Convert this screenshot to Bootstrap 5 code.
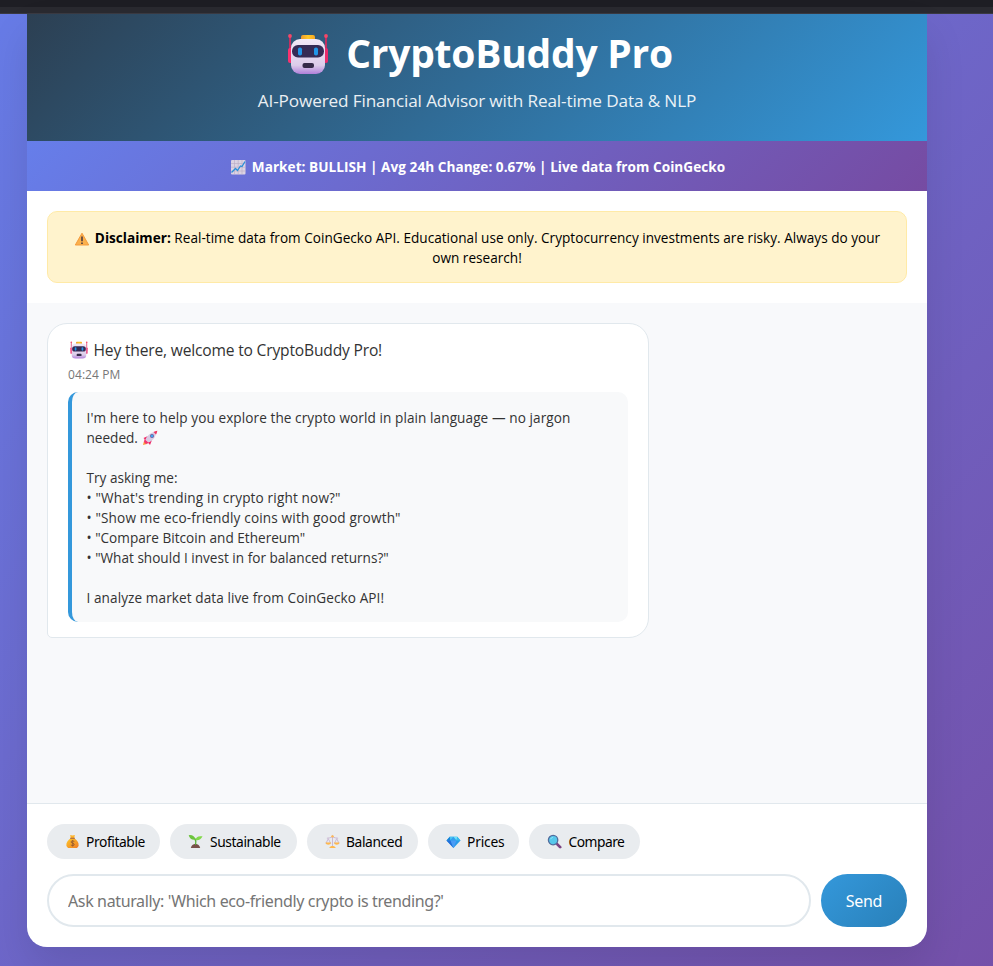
<!DOCTYPE html>
<html lang="en">
<head>
<meta charset="utf-8">
<meta name="viewport" content="width=device-width, initial-scale=1">
<title>CryptoBuddy Pro</title>
<link href="https://cdn.jsdelivr.net/npm/bootstrap@5.3.0/dist/css/bootstrap.min.css" rel="stylesheet">
<style>
body{font-family:"Open Sans","Noto Sans",sans-serif;color:#333;height:966px;background:linear-gradient(135deg,#667eea 0%,#764ba2 100%) 0 -100px/1150px 1150px no-repeat;overflow:hidden}
.browser-edge{height:14px;background:linear-gradient(#1e1e24 0 7px,#2a2a30 7px 13px,#3a3a42 13px 14px)}
.app{width:900px;height:933px;margin-left:27px;background:#fff;border-radius:0 0 20px 20px;box-shadow:0 20px 40px rgba(0,0,0,.1);overflow:hidden}
.app-head{height:127px;padding-top:12px;background:linear-gradient(135deg,#2c3e50,#3498db) 0 100%/100% 143px}
.ic{display:inline-block;flex:none;width:16px;height:16px}
.title{font-size:39px;font-weight:700;line-height:53px;gap:17px;padding-left:6px;letter-spacing:-.25px}
.title .ic{width:42px;height:42px;margin-top:2px}
.subtitle{font-size:17.2px;line-height:24px;opacity:.9;margin-top:10px;letter-spacing:-.14px}
.market{height:50px;padding-top:2px;padding-left:1px;gap:6px;background:linear-gradient(135deg,#667eea,#764ba2);font-size:13.6px;font-weight:700;letter-spacing:.035px}
.notice-wrap{padding:20px}
.notice{height:72px;background:#fff3cd;border:1px solid #ffeaa7;border-radius:10px;padding-top:16px;font-size:13.6px;line-height:20px;color:#000;letter-spacing:.01px}
.notice .ic{vertical-align:-4px;margin-right:5px}
.chat{height:500px;background:#f8f9fb;padding:20px}
.bubble{width:602px;height:315px;border:1px solid #e1e8ed;border-radius:20px 20px 20px 5px;padding:15px 20px}
.hello{font-size:15.6px;line-height:24px;letter-spacing:-.18px;padding-left:2px;gap:5.5px;margin-top:-1px}
.hello .ic{width:18px;height:18px}
.time{font-size:12px;line-height:16px;color:#777;margin-top:5px;letter-spacing:.08px}
.reply{height:230px;background:#f8f9fa;border-left:4px solid #3498db;border-radius:10px;font-size:13.6px;line-height:20px;padding:16px 14.5px;margin-top:9px;white-space:pre-line;letter-spacing:.08px}
.reply .ic{vertical-align:-3px}
.looser{letter-spacing:.15px}
.tighter{letter-spacing:0}
.composer{border-top:1px solid #e1e8ed;padding:20px;gap:15px}
.g10{gap:10px}
.chip{height:35px;border-radius:20px;background:#e9ecef;border:0;font:13.8px/20px "Noto Sans",sans-serif;color:#000;padding:0 0 0 18px;gap:5px;white-space:nowrap;letter-spacing:-.4px}
.chip-profit{width:113px}.chip-sustain{width:127px;gap:6px}.chip-balance{width:111px}.chip-price{width:91px;letter-spacing:-.2px}.chip-compare{width:111px;gap:5.5px;letter-spacing:-.5px}
.chip .ic{width:15px;height:15px;margin-right:1px}
.ask{height:53px;width:764px;border:2px solid #e1e8ed;border-radius:27px;font:16px/24px "Noto Sans",sans-serif;letter-spacing:-.37px;padding:0 19px;outline:0}
.ask::placeholder{color:#757575;opacity:1}
.send{width:86px;height:53px;border:0;border-radius:27px;background:linear-gradient(135deg,#3498db,#2980b9);font:16px/24px "Noto Sans",sans-serif;letter-spacing:-.3px;color:#fff}
</style>
</head>
<body>
<svg width="0" height="0" class="position-absolute" aria-hidden="true"><defs>
<linearGradient id="gFace" x2="0" y2="1"><stop stop-color="#f2e9f7"/><stop offset=".75" stop-color="#dccdea"/><stop offset="1" stop-color="#b07fda"/></linearGradient>
<linearGradient id="gGold" x2="1" y2="1"><stop stop-color="#ffc928"/><stop offset="1" stop-color="#ee7b28"/></linearGradient>
<linearGradient id="gCap"><stop stop-color="#ee9a2e"/><stop offset=".5" stop-color="#ffc928"/><stop offset="1" stop-color="#f5a623"/></linearGradient>
<symbol id="robot" viewBox="0 0 42 42"><path d="M3 3v20M39 3v20" stroke="#dc285e" stroke-width="1.700"/><circle cx="3" cy="3" r="1.900" fill="#f44868"/><circle cx="39" cy="3" r="1.900" fill="#f44868"/><rect x="1" y="15" width="6" height="15" rx="2" fill="#f9326f"/><rect x="35" y="15" width="6" height="15" rx="2" fill="#e82b6c"/><rect x="14" y="2" width="14" height="7" rx="2" fill="url(#gCap)"/><rect x="4" y="6" width="34" height="35" rx="9" fill="url(#gFace)"/><rect x="5" y="12" width="32" height="12.500" rx="6" fill="#352b55"/><rect x="11" y="14.500" width="4" height="8" rx="1.800" fill="#2196e8"/><rect x="27" y="14.500" width="4" height="8" rx="1.800" fill="#2196e8"/><rect x="15.500" y="30" width="11.500" height="5" rx="2" fill="#352b49"/></symbol>
<symbol id="chart" viewBox="0 0 16 16"><rect x="1" y="1" width="14.500" height="14.500" rx="1" fill="#dcd3e3"/><path d="M4.500 1v14.500M8.200 1v14.500M12 1v14.500M1 4.500h14.500M1 8.200h14.500M1 12h14.500" stroke="#b8abc5" stroke-width=".6"/><path d="M1.500 13.500 5.500 9.500l2 2L10.500 7l1.500.5L15 2.500" fill="none" stroke="#2b8fd8" stroke-width="1.300"/></symbol>
<symbol id="warn" viewBox="0 0 16 16"><path d="M8 2.200 14.700 14H1.300z" fill="#fbb04c" stroke="#f59b3d" stroke-width="1" stroke-linejoin="round"/><path d="M8 5.500v4.800M8 11.500v1.500" stroke="#4b3a42" stroke-width="1.600"/></symbol>
<symbol id="rocket" viewBox="0 0 16 16"><path d="M1 15l1-4 3 3z" fill="#ff9838"/><path d="M6 6 1.500 8l2 2zM10 10l-2 5-2-2.500z" fill="#ee2864"/><path d="M3.500 9.500Q6 3.500 12 2l2 2q-1.500 6-7.500 8.500z" fill="#d8cbe3"/><path d="M11.500 2Q13 1 15.300.7 15 3 14 4.500z" fill="#ef3562"/><path d="m2.500 9 4.500 4-3 1-2-2z" fill="#f2366f"/><circle cx="10" cy="6" r="2" fill="#72599e"/><circle cx="10" cy="6" r="1.300" fill="#40a4eb"/></symbol>
<symbol id="bag" viewBox="0 0 16 16"><path d="M5.500 1q2.500 1 5 0L9.800 4.500H6.200z" fill="#ffb52a"/><path d="M6 4.500h4q5 3.500 4.500 7.500-.5 3-3 3h-7q-2.500 0-3-3Q1 8 6 4.500z" fill="url(#gGold)"/><path d="M5.500 4.500h5" stroke="#9d593b" stroke-width="1.200"/><path d="M10 8q-2-1.300-3.300-.3-1.200 1.500 1.500 2 2.500.8 1.300 2.300-1.500 1-3.300-.3M8.200 6.500v6.800" fill="none" stroke="#8a5034" stroke-width=".8"/></symbol>
<symbol id="sprout" viewBox="0 0 16 16"><path d="M3 15q1-4 5-4.500 4 .5 5 4.500z" fill="#79504b"/><path d="M8 11.500Q9 8 7.500 5" fill="none" stroke="#5db63c" stroke-width="1.600"/><path d="M8 6Q2.500 7 .7 1.200 6.700.5 8 6z" fill="#6cc33d"/><path d="M8 6.500Q8.500 1.500 15.500 2.500 13 7.500 8 6.500z" fill="#82d94a"/></symbol>
<symbol id="scale" viewBox="0 0 16 16"><path d="M8 1v12M2 4.500q3 0 6-1.500 3 1.500 6 1.500M3.500 5 1 10h5zM12.500 5 10 10h5z" fill="none" stroke="#c9b5d2" stroke-width="1"/><path d="M.5 9h6Q6 11.500 3.500 11.500T.5 9zM9.500 9h6q-.5 2.500-3 2.500T9.500 9zM4.500 15q.5-2 2.500-2.300h2q2 .3 2.500 2.300z" fill="#ffb84c"/><circle cx="8" cy="2.500" r="1.300" fill="#ffb851"/></symbol>
<symbol id="gem" viewBox="0 0 16 16"><path d="M4 3h8l3.500 4L8 15 .5 7z" fill="#279be9"/><path d="M4 3 .5 7h4.300z" fill="#1785d6"/><path d="m4 3 .8 4L8 3z" fill="#48c5f5"/><path d="M8 3 4.800 7h6.400z" fill="#329fef"/><path d="m8 3 3.200 4L12 3z" fill="#70e2f8"/><path d="m12 3-.8 4h4.300z" fill="#39bdec"/><path d="M.5 7h4.300L8 15z" fill="#246dd9"/><path d="M4.800 7h6.400L8 15z" fill="#4b9bf5"/></symbol>
<symbol id="lens" viewBox="0 0 16 16"><path d="m10 10 4 4" stroke="#7c4483" stroke-width="3" stroke-linecap="round"/><circle cx="6.500" cy="6.500" r="5" fill="#57c8eb" stroke="#526c9d" stroke-width="1.400"/><path d="M3.800 5.500q.7-1.700 2.500-2" stroke="#92e5f7" fill="none"/></symbol>
</defs></svg>
<div class="browser-edge"></div>
<main class="app d-flex flex-column">
<header class="app-head text-white text-center d-flex flex-column align-items-center">
<h1 class="title d-flex align-items-center mb-0"><svg class="ic"><use href="#robot"/></svg><span>CryptoBuddy Pro</span></h1>
<p class="subtitle mb-0">AI-Powered Financial Advisor with Real-time Data &amp; NLP</p>
</header>
<div class="market text-white d-flex align-items-center justify-content-center"><svg class="ic"><use href="#chart"/></svg><span>Market: BULLISH | Avg 24h Change: 0.67% | Live data from CoinGecko</span></div>
<div class="notice-wrap"><div class="notice text-center"><svg class="ic"><use href="#warn"/></svg><strong>Disclaimer:</strong> Real-time data from CoinGecko API. Educational use only. Cryptocurrency investments are risky. Always do your<br>own research!</div></div>
<section class="chat"><div class="bubble bg-white"><div class="hello d-flex align-items-center"><svg class="ic"><use href="#robot"/></svg><span>Hey there, welcome to CryptoBuddy Pro!</span></div><div class="time">04:24 PM</div>
<div class="reply">I'm here to help you explore the crypto world in plain language — no jargon
<span class="tighter">needed.</span> <svg class="ic"><use href="#rocket"/></svg>

<span class="tighter">Try asking me:</span>
<span class="looser">• "What's trending in crypto right now?"</span>
<span class="looser">• "Show me eco-friendly coins with good growth"</span>
<span class="tighter">• "Compare Bitcoin and Ethereum"</span>
<span class="tighter">• "What should I invest in for balanced returns?"</span>

I analyze market data live from CoinGecko API!</div></div></section>
<footer class="composer d-flex flex-column"><div class="d-flex g10">
<button class="chip chip-profit d-flex align-items-center"><svg class="ic"><use href="#bag"/></svg>Profitable</button>
<button class="chip chip-sustain d-flex align-items-center"><svg class="ic"><use href="#sprout"/></svg>Sustainable</button>
<button class="chip chip-balance d-flex align-items-center"><svg class="ic"><use href="#scale"/></svg>Balanced</button>
<button class="chip chip-price d-flex align-items-center"><svg class="ic"><use href="#gem"/></svg>Prices</button>
<button class="chip chip-compare d-flex align-items-center"><svg class="ic"><use href="#lens"/></svg>Compare</button></div>
<div class="d-flex g10"><input class="ask" type="text" placeholder="Ask naturally: 'Which eco-friendly crypto is trending?'"><button class="send">Send</button></div></footer>
</main>
<script src="https://cdn.jsdelivr.net/npm/bootstrap@5.3.0/dist/js/bootstrap.bundle.min.js"></script>
</body>
</html>
